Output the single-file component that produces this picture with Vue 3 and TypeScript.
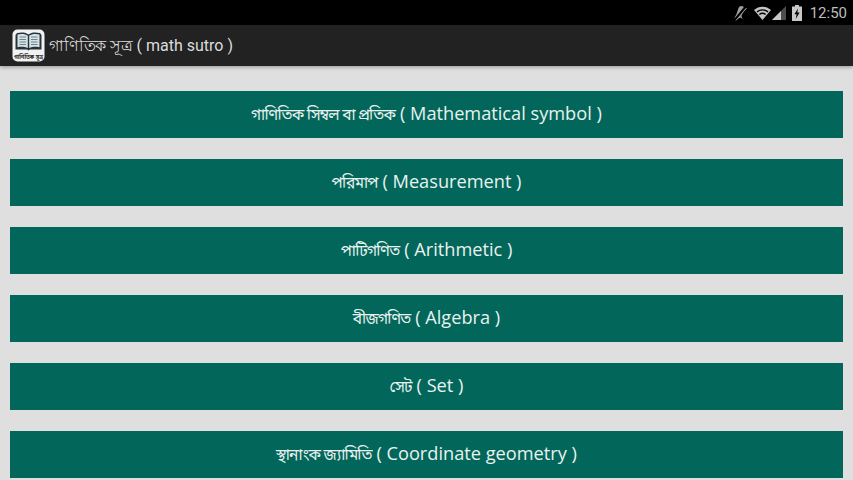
<template>
  <div class="screen">
    <div class="status-bar">
      <svg class="st-icon mute" width="14" height="16" viewBox="0 0 14 16">
        <path d="M8.5 1 C10.5 1 11.5 2.5 11 4.5 L8.5 11 L9.5 14 L7.5 12.5 L3 14.5 L1.5 13 L3.5 9 L5.5 3 C6 1.8 7 1 8.5 1 Z" fill="#9e9e9e" />
        <path d="M1.5 15.5 L13 1.5" stroke="#000" stroke-width="2.6" />
        <path d="M3 15.5 L13.5 3" stroke="#a8a8a8" stroke-width="1" />
      </svg>
      <svg class="st-icon wifi" width="17" height="14" viewBox="0 0 17 14">
        <path d="M0 4 A12.5 12.5 0 0 1 17 4 L8.5 14 Z" fill="#c4c4c4" />
        <path d="M2.5 5.3 A9.5 9.5 0 0 1 14.5 5.3 L13.6 6.4 A8 8 0 0 0 3.4 6.4 Z" fill="#000" />
        <path d="M4.9 8 A5.8 5.8 0 0 1 12.1 8 L11.2 9.1 A4.4 4.4 0 0 0 5.8 9.1 Z" fill="#000" />
      </svg>
      <svg class="st-icon signal" width="14" height="16" viewBox="0 0 14 16">
        <path d="M0 15 L14 1 L14 15 Z" fill="#4d4d4d" />
        <path d="M0 15 L9 6 L9 15 Z" fill="#c8c8c8" />
      </svg>
      <svg class="st-icon battery" width="10" height="16" viewBox="0 0 10 16">
        <path d="M3 0 H7 V1.5 H10 V16 H0 V1.5 H3 Z" fill="#c8c8c8" />
        <path d="M6 3.5 L2.4 9.2 H4.6 L3.8 14 L7.6 7.6 H5.3 Z" fill="#000" />
      </svg>
      <span class="clock">12:50</span>
    </div>

    <header class="action-bar">
      <svg class="logo" width="33" height="33" viewBox="0 0 33 33">
        <rect x="0.5" y="0.5" width="32" height="32" rx="5" fill="#f2f2f2" />
        <path d="M3.5 6 L5 4 C9 3 14 3 16.5 5.5 C19 3 24 3 28 4 L29.5 6 V20.5 H18 L16.5 21.5 L15 20.5 H3.5 Z" fill="#26343c" />
        <path d="M5.5 5.5 C9 4.6 13.5 4.8 15.8 6.8 V19 C13 17.6 9 17.4 5.5 18.2 Z" fill="#d6e2e6" />
        <path d="M27.5 5.5 C24 4.6 19.5 4.8 17.2 6.8 V19 C20 17.6 24 17.4 27.5 18.2 Z" fill="#d6e2e6" />
        <path d="M7.5 8 H14 M7.5 10.5 H14 M7.5 13 H14 M7.5 15.5 H14 M19 8 H25.5 M19 10.5 H25.5 M19 13 H25.5 M19 15.5 H25.5" stroke="#6b8490" stroke-width="1" />
        <text x="16.5" y="29.5" class="logo-text" text-anchor="middle">গাণিতিক সূত্র</text>
      </svg>
      <h1 class="title"><span class="bn">গাণিতিক সূত্র</span> ( math sutro )</h1>
    </header>

    <main class="menu">
      <button v-for="item in items" :key="item.en" class="menu-btn" type="button">
        <span class="bn">{{ item.bn }}</span> ( {{ item.en }} )
      </button>
    </main>
  </div>
</template>

<script setup lang="ts">
interface MenuItem {
  bn: string;
  en: string;
}

const items: MenuItem[] = [
  { bn: "গাণিতিক সিম্বল বা প্রতিক", en: "Mathematical symbol" },
  { bn: "পরিমাপ", en: "Measurement" },
  { bn: "পাটিগণিত", en: "Arithmetic" },
  { bn: "বীজগণিত", en: "Algebra" },
  { bn: "সেট", en: "Set" },
  { bn: "স্থানাংক জ্যামিতি", en: "Coordinate geometry" },
];
</script>

<style>
html,
body {
  margin: 0;
  overflow: hidden;
}
</style>

<style scoped>
.screen {
  width: 853px;
  height: 480px;
  overflow: hidden;
  display: flex;
  flex-direction: column;
  background-color: #dfdfdf;
  font-family: "Open Sans", "Noto Sans", "Noto Sans Bengali", "Lohit Bengali", sans-serif;
}

.status-bar {
  height: 25px;
  flex: none;
  display: flex;
  align-items: center;
  justify-content: flex-end;
  padding-right: 6px;
  background-color: #000;
}

.st-icon {
  display: block;
}

.mute {
  margin-right: 7px;
}

.wifi {
  margin-right: 1px;
}

.signal {
  margin-right: 6px;
}

.clock {
  margin-left: 8px;
  font-family: Roboto, sans-serif;
  font-size: 15px;
  color: #bdbdbd;
}

.action-bar {
  height: 41px;
  flex: none;
  display: flex;
  align-items: center;
  gap: 4px;
  padding-left: 12px;
  background-color: #222;
  box-shadow: 0 1px 4px rgba(0, 0, 0, 0.35);
}

.logo {
  flex: none;
}

.logo-text {
  font-size: 5.5px;
  font-weight: 700;
  fill: #2a2a2a;
}

.title {
  margin: 0;
  padding-top: 1px;
  font-family: Roboto, "Noto Sans", sans-serif;
  font-size: 16px;
  font-weight: 400;
  color: #dcdcdc;
}

.title .bn {
  letter-spacing: -0.2px;
}

.menu {
  display: flex;
  flex-direction: column;
  gap: 21px;
  padding: 25px 10px 0;
}

.menu-btn {
  height: 47px;
  flex: none;
  border: 0;
  padding: 0 0 2px;
  background-color: #03665a;
  color: #e8f2ef;
  font-family: inherit;
  font-size: 18.2px;
}

.menu-btn .bn {
  font-size: 15.5px;
  letter-spacing: -0.75px;
}
</style>
